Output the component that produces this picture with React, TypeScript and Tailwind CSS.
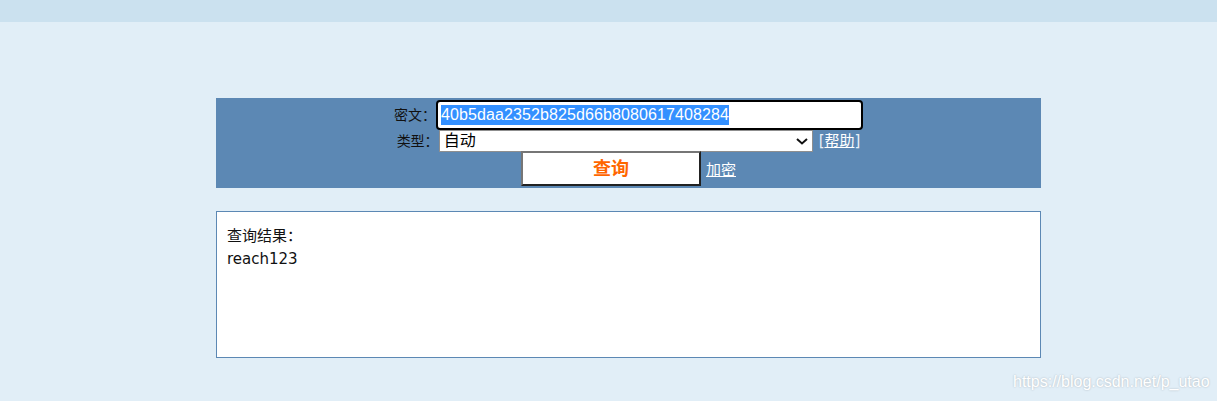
import React from "react";

const cjk = "font-['DejaVu_Sans','Noto_Sans_CJK_SC',sans-serif]";

const ChevronDown: React.FC = () => (
  <svg width="12" height="7" viewBox="0 0 12 7" className="block">
    <path d="M1 1 L6 5.5 L11 1" fill="none" stroke="#111" strokeWidth="2" />
  </svg>
);

const QueryForm: React.FC = () => (
  <div className="ml-[216px] w-[825px] mt-[76px] bg-[#5c88b4] pt-[2px] pb-[2px] flex flex-col items-center">
    {/* 密文 */}
    <div className="flex items-center h-[30px]">
      <span className={`${cjk} text-[14px] text-[#111] w-[42px]`}>密文：</span>
      <div className="w-[427px] h-[30px] border-2 border-black rounded-[4px] bg-white shadow-[inset_0_0_0_1px_#fff] flex items-center pl-[3px]">
        <span className="font-['Liberation_Sans',Arial,sans-serif] text-[16px] leading-[20px] bg-[#3390ff] text-white tracking-[0.1px]">
          40b5daa2352b825d66b8080617408284
        </span>
      </div>
    </div>
    {/* 类型 */}
    <div className="flex items-center h-[22px]">
      <span className={`${cjk} text-[14px] text-[#111] w-[42px]`}>类型：</span>
      <div className="w-[374px] h-[22px] border border-[#8f8f8f] bg-white flex items-center justify-between pl-[4px] pr-[4px]">
        <span className={`${cjk} text-[16px] leading-[20px] text-black`}>自动</span>
        <ChevronDown />
      </div>
      <span className={`${cjk} text-[15px] text-[#e8f0f8] ml-[6px]`}>
        [<span className="underline text-white">帮助</span>]
      </span>
    </div>
    {/* 查询 */}
    <div className="flex items-center -mt-[1px]">
      <button className="w-[180px] h-[35px] bg-white border-2 border-t-[#767676] border-l-[#767676] border-b-[#222] border-r-[#222] flex items-center justify-center">
        <span className={`${cjk} text-[18px] font-bold text-[#ff6600]`}>查询</span>
      </button>
      <a className={`${cjk} text-[15px] text-white underline ml-[5px] mt-[4px]`}>加密</a>
    </div>
  </div>
);

export default function App() {
  return (
    <div className="w-[1217px] h-[401px] bg-[#e1eef7] relative overflow-hidden">
      <div className="h-[22px] bg-[#cbe1ef]" />
      <QueryForm />
      <div className="ml-[216px] w-[825px] h-[147px] mt-[23px] bg-white border border-[#5c88b4] pl-[10px] pt-[13px]">
        <div className={`${cjk} text-[15px] leading-[23px] text-[#111]`}>查询结果：</div>
        <div className={`${cjk} text-[15px] leading-[23px] text-[#111]`}>reach123</div>
      </div>
      <span className="absolute left-[1013px] top-[370px] font-['Liberation_Sans',Arial,sans-serif] text-[16px] text-white [text-shadow:0_0_2px_rgba(0,0,0,0.25)]">
        https://blog.csdn.net/p_utao
      </span>
    </div>
  );
}
